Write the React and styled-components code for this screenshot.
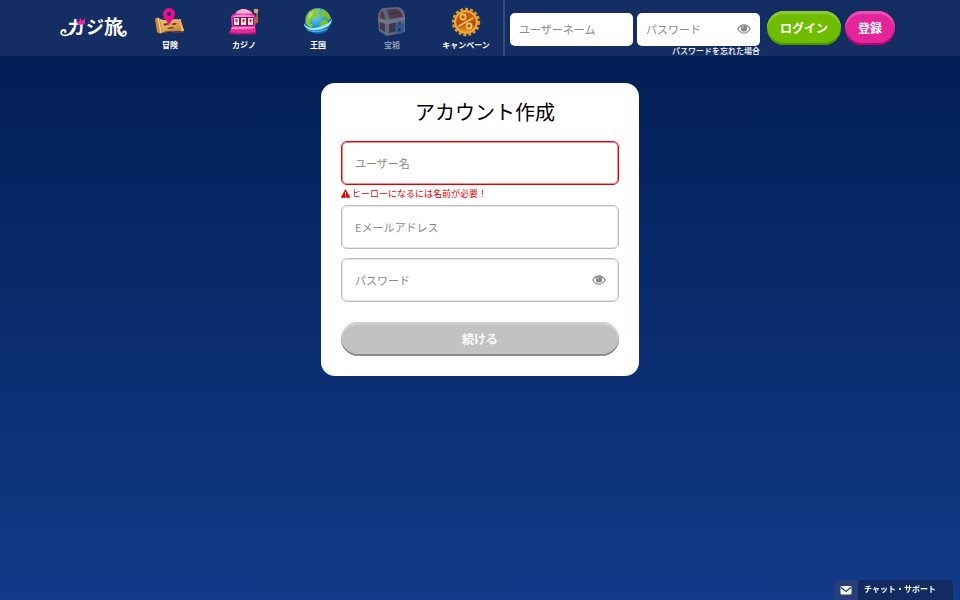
import React, { useState } from "react";
import styled, { createGlobalStyle } from "styled-components";

const GlobalStyle = createGlobalStyle`
  * {
    box-sizing: border-box;
  }

  body {
    margin: 0;
    min-height: 100vh;
    color: #fff;
    font-family: "Noto Sans CJK JP", "Noto Sans", sans-serif;
    background: linear-gradient(#001b50, #123a88) no-repeat fixed;
  }

  input,
  button {
    font-family: inherit;
  }
`;

const Header = styled.header`
  display: flex;
  height: 56px;
  padding-left: 60px;
  background: #142d63;
`;

const Logo = styled.a`
  width: 73px;
  padding-top: 12px;
`;

const Nav = styled.nav`
  display: flex;
  border-right: 2px solid #344c7e;
`;

const NavItem = styled.a`
  display: flex;
  flex-direction: column;
  align-items: center;
  gap: 1px;
  width: 74px;
  padding-top: 6px;
  color: #fff;
  font-size: 8px;
  font-weight: 700;
  line-height: 12px;
  text-decoration: none;
  opacity: ${(props) => (props.$locked ? 0.5 : 1)};
`;

const LoginForm = styled.form`
  display: flex;
  align-items: flex-start;
  gap: 4px;
  padding: 11px 0 0 5px;
`;

const LoginField = styled.div`
  width: 123px;
  padding-top: 2px;
`;

const InputWrapper = styled.div`
  position: relative;
`;

const LoginInput = styled.input`
  display: block;
  width: 100%;
  height: 33px;
  padding: 0 9px 2px;
  border: 0;
  border-radius: 5px;
  background: #fff;
  font-size: 11px;

  &::placeholder {
    color: #8a8a8a;
  }
`;

const ForgotLink = styled.a`
  display: block;
  color: #fff;
  font-size: 8px;
  font-weight: 500;
  line-height: 10px;
  text-align: right;
  text-decoration: none;
`;

const EyeButton = styled.button`
  position: absolute;
  top: 0;
  right: ${(props) => props.$right};
  display: flex;
  align-items: center;
  height: 100%;
  padding: 0 0 1px;
  border: 0;
  background: none;
  color: #888;
  cursor: pointer;
`;

const PillButton = styled.button`
  height: 34px;
  padding: 0 13px 1px;
  border: 0;
  border-radius: 17px;
  color: #fff;
  font-size: 12px;
  font-weight: 700;
  white-space: nowrap;
  background: ${(props) => props.$bg};
  box-shadow: inset 0 -2px 0 ${(props) => props.$shade},
    inset 0 3px 0 ${(props) => props.$light};
  cursor: pointer;
`;

const LoginButton = styled(PillButton)`
  margin-left: 3px;
`;

const SubmitButton = styled(PillButton)`
  width: 100%;
  margin-top: 20px;
`;

const Main = styled.main`
  display: flex;
  justify-content: center;
  padding: 27px 20px 40px;
`;

const Card = styled.form`
  width: 100%;
  max-width: 318px;
  padding: 14px 20px 20px;
  border-radius: 14px;
  background: #fff;
`;

const Title = styled.h1`
  margin: 0 0 14px;
  padding-left: 10px;
  color: #000;
  font-size: 20px;
  font-weight: 400;
  line-height: 30px;
  text-align: center;
`;

const Field = styled.div`
  position: relative;

  & + & {
    margin-top: 9px;
  }
`;

const FieldInput = styled.input`
  display: block;
  width: 100%;
  height: 44px;
  padding: 0 13px 1px;
  border: 1px solid ${(props) => (props.$error ? "#e60000" : "#bcbcbc")};
  border-radius: 6px;
  box-shadow: inset 0 0 0 1px ${(props) => (props.$error ? "#f79090" : "#e6e6e6")};
  background: #fff;
  font-size: 11px;

  &::placeholder {
    color: #8a8a8a;
  }
`;

const ErrorText = styled.p`
  display: flex;
  align-items: center;
  gap: 2px;
  height: 20px;
  margin: 0;
  padding-bottom: 4px;
  color: #e60000;
  font-size: 9px;
`;

const ChatButton = styled.button`
  position: fixed;
  right: 7px;
  bottom: 0;
  display: flex;
  width: 119px;
  height: 20px;
  padding: 0;
  border: 0;
  border-radius: 4px 4px 0 0;
  overflow: hidden;
  background: #142b61;
  color: #fff;
  font-size: 8px;
  font-weight: 700;
  line-height: 18px;
  cursor: pointer;
`;

const ChatIcon = styled.span`
  display: flex;
  align-items: center;
  justify-content: center;
  width: 24px;
  height: 20px;
  margin-right: 6px;
  background: #263f78;
`;

function LogoArt() {
  return (
    <svg width="68" height="30" viewBox="0 0 68 30" role="img" aria-label="カジ旅">
      <g fill="#fff" fontFamily="Noto Sans CJK JP, sans-serif" fontWeight="700">
        <text x="7" y="22" fontSize="18">カ</text>
        <text x="26" y="22" fontSize="18">ジ</text>
        <text x="44" y="22" fontSize="19">旅</text>
      </g>
      <path
        d="M13 17C11 22 7 24 3 23C0 22 1 18 4 18C6 18 6 20 5 20M58 19C60 25 66 25 66 21C66 19 63 19 63 21"
        fill="none"
        stroke="#fff"
        strokeWidth="1.8"
        strokeLinecap="round"
      />
      <path d="M18 13L16 8L19 10L20 5L22 9L25 6L25 12Z" fill="#e4249b" />
    </svg>
  );
}

function MapIcon() {
  return (
    <svg width="32" height="32" viewBox="0 0 32 32" aria-hidden="true">
      <defs>
        <linearGradient id="map" x1="0" y1="0" x2="1" y2="1">
          <stop offset="0" stopColor="#f0cd86" />
          <stop offset="0.55" stopColor="#dda355" />
          <stop offset="1" stopColor="#b86a27" />
        </linearGradient>
      </defs>
      <path d="M4 12L9 14L23 13L26 14L30 25L22 25Q13 24 8 27L5 27Z" fill="url(#map)" />
      <path d="M1 13Q3 10 6 13L8 26Q6 29 3 26Z" fill="#c98542" />
      <path d="M4 12L7 27" stroke="#f5d18b" strokeWidth="1.3" />
      <path d="M25 13Q27 12 27 15L30 24Q29 27 27 25Z" fill="#ecb365" />
      <path d="M8 27Q15 24 22 26L29 26" stroke="#91511f" fill="none" />
      <path d="M9 18l4-1 2 1-4 2zM13 22l5-1 3 1-6 1zM19 17l4 0-2 2-3 0z" fill="#633b1e" />
      <path d="M15 20C14 15 9 13 9 8a6 6 0 0 1 12 0C21 13 16 15 15 20Z" fill="#ea0d91" />
      <circle cx="15" cy="8" r="2" fill="#142d63" />
    </svg>
  );
}

function SlotIcon() {
  return (
    <svg width="32" height="32" viewBox="0 0 32 32" aria-hidden="true">
      <path d="M7 10Q7 5 11 4Q15 2 20 4Q25 5 25 10Z" fill="#ec77b6" />
      <path d="M9 7Q12 3 15 3Q20 3 23 7Z" fill="#f7b3d5" />
      <path d="M3 12Q3 8 7 8H24Q27 8 28 12L27 23H4Z" fill="#e9309f" />
      <path d="M5 10Q15 7 26 10V11H5Z" fill="#fb91cc" />
      <rect x="5" y="11" width="21" height="9" rx="2" fill="#970a5c" />
      <path d="M6 12h5v7H6zM13 12h5v7h-5zM20 12h5v7h-5z" fill="#fff0df" />
      <path d="M7 14L8.500 13L10 14L8.500 17ZM14 14L15.500 13L17 14L15.500 17ZM21 14L22.500 13L24 14L22.500 17Z" fill="#d42548" />
      <path d="M4 21H27L28 27Q15 29 1 27Z" fill="#e82a9c" />
      <path d="M4 21H27V22Q15 24 3 23Z" fill="#fb8cca" />
      <path d="M1 26Q15 28 28 26V28Q15 29 1 28Z" fill="#b8117a" />
      <path d="M27 17L29 13V6" fill="none" stroke="#b9785c" strokeWidth="1.5" />
      <circle cx="28" cy="5" r="2.3" fill="#e8a16e" />
      <circle cx="28" cy="15" r="2.3" fill="#c66334" />
    </svg>
  );
}

function GlobeIcon() {
  return (
    <svg width="32" height="32" viewBox="0 0 32 32" aria-hidden="true">
      <defs>
        <radialGradient id="sea" cx="0.4" cy="0.3" r="0.8">
          <stop offset="0" stopColor="#6dd5f5" />
          <stop offset="0.6" stopColor="#178bd3" />
          <stop offset="1" stopColor="#0758a2" />
        </radialGradient>
      </defs>
      <circle cx="16" cy="15" r="13" fill="url(#sea)" />
      <path d="M4 12Q6 5 12 3L18 3L17 6L14 7L17 9L13 13L9 13L8 17L11 19L9 22L4 18Z" fill="#89c936" />
      <path d="M20 3Q26 5 29 12L26 14L24 11L21 12L18 9ZM19 15L24 13L27 17L22 21L17 19Z" fill="#7fbf2f" />
      <path d="M7 7L11 5L10 10L6 13Z" fill="#b3df66" />
      <path
        d="M2 17C4 23 13 23 20 20C26 18 30 15 30 12C31 18 24 23 15 24C8 25 1 22 2 17Z"
        fill="#a8e6f7"
      />
      <path d="M5 24Q14 28 25 23" fill="none" stroke="#63b7e2" strokeLinecap="round" />
    </svg>
  );
}

function ChestIcon() {
  return (
    <svg width="32" height="32" viewBox="0 0 32 32" aria-hidden="true">
      <path d="M2 12Q2 4 7 2L22 1Q29 3 29 11V26L11 30L3 25Z" fill="#aaa49b" />
      <path d="M4 12Q4 5 6 5Q9 7 9 14ZM10 4L21 3Q26 5 27 11L13 13Q13 7 10 4Z" fill="#8e4a31" />
      <path d="M4 16L9 18V26L4 23ZM13 18L27 15V24L13 27Z" fill="#79432e" />
      <path d="M2 12L11 15L29 11V14L11 18L2 15Z" fill="#c7c1b8" />
      <path d="M13 8L24 6M13 21L27 18M13 24L27 21M4 19L9 22" stroke="#4f3028" />
      <path d="M21 20V17a2.500 2.500 0 0 1 5 0v3" fill="none" stroke="#9db8d5" strokeWidth="1.6" />
      <path d="M19 19L28 18V24Q27 28 23 28Q20 28 19 25Z" fill="#4783c1" />
      <path d="M23.500 22v3" stroke="#152b5c" strokeWidth="2" />
    </svg>
  );
}

function CampaignIcon() {
  return (
    <svg width="32" height="32" viewBox="0 0 32 32" aria-hidden="true">
      <defs>
        <linearGradient id="coin" x1="0" y1="0" x2="0" y2="1">
          <stop offset="0" stopColor="#c96616" />
          <stop offset="0.6" stopColor="#b44f0c" />
          <stop offset="1" stopColor="#e99a2b" />
        </linearGradient>
      </defs>
      <circle cx="16" cy="16" r="13" fill="none" stroke="#d99a36" strokeWidth="2.4" strokeDasharray="3 2" />
      <circle cx="16" cy="16" r="12" fill="#f0a93a" />
      <circle cx="16" cy="16" r="10" fill="url(#coin)" />
      <g fill="none" stroke="#ffc75c" strokeWidth="1.6" strokeLinecap="round">
        <path d="M9 20L23 12" />
        <circle cx="13" cy="11" r="2.600" />
        <circle cx="19" cy="20" r="2.600" />
      </g>
    </svg>
  );
}

function EyeIcon() {
  return (
    <svg width="14" height="12" viewBox="0 0 14 12" aria-hidden="true">
      <path
        d="M.7 6Q3.5 1.8 7 1.8T13.3 6Q10.5 10.2 7 10.2T.7 6Z"
        fill="none"
        stroke="currentColor"
        strokeWidth="1.2"
      />
      <circle cx="7" cy="5.4" r="3.2" fill="currentColor" />
      <path d="M5.4 5Q5.5 3.8 6.8 3.6" fill="none" stroke="#fff" strokeWidth=".6" />
    </svg>
  );
}

function WarningIcon() {
  return (
    <svg width="9" height="9" viewBox="0 0 9 9" aria-hidden="true">
      <path d="M4.5.5L9 8.5H0Z" fill="#e60000" stroke="#e60000" strokeWidth=".5" strokeLinejoin="round" />
      <path d="M4.5 3v3M4.5 6.7v1" stroke="#fff" />
    </svg>
  );
}

function MailIcon() {
  return (
    <svg width="12" height="10" viewBox="0 0 12 10" aria-hidden="true">
      <rect x="0.5" y="1" width="11" height="8.5" rx="1.5" fill="#fff" />
      <path d="M1 2.5L6 6.5L11 2.5" fill="none" stroke="#263f78" strokeWidth="1.3" />
    </svg>
  );
}

const navItems = [
  { label: "冒険", Icon: MapIcon },
  { label: "カジノ", Icon: SlotIcon },
  { label: "王国", Icon: GlobeIcon },
  { label: "宝箱", Icon: ChestIcon, locked: true },
  { label: "キャンペーン", Icon: CampaignIcon },
];

function App() {
  const [showLogin, setShowLogin] = useState(false);
  const [showSignup, setShowSignup] = useState(false);

  const handleSubmit = (e) => e.preventDefault();

  return (
    <>
      <GlobalStyle />
      <Header>
        <Logo href="#">
          <LogoArt />
        </Logo>
        <Nav>
          {navItems.map(({ label, Icon, locked }) => (
            <NavItem key={label} href="#" $locked={locked}>
              <Icon />
              {label}
            </NavItem>
          ))}
        </Nav>
        <LoginForm onSubmit={handleSubmit}>
          <LoginField>
            <LoginInput type="text" placeholder="ユーザーネーム" aria-label="ユーザーネーム" />
          </LoginField>
          <LoginField>
            <InputWrapper>
              <LoginInput
                type={showLogin ? "text" : "password"}
                placeholder="パスワード"
                aria-label="パスワード"
              />
              <EyeButton
                type="button"
                $right="9px"
                aria-label="パスワードを表示"
                onClick={() => setShowLogin(!showLogin)}
              >
                <EyeIcon />
              </EyeButton>
            </InputWrapper>
            <ForgotLink href="#">パスワードを忘れた場合</ForgotLink>
          </LoginField>
          <LoginButton type="submit" $bg="#70bd00" $shade="#4b9700" $light="#8bcb35">
            ログイン
          </LoginButton>
          <PillButton type="button" $bg="#e4249b" $shade="#bd0079" $light="#ea50af">
            登録
          </PillButton>
        </LoginForm>
      </Header>

      <Main>
        <Card onSubmit={handleSubmit} noValidate>
          <Title>アカウント作成</Title>
          <Field>
            <FieldInput
              type="text"
              placeholder="ユーザー名"
              aria-label="ユーザー名"
              aria-invalid="true"
              aria-describedby="name-error"
              $error
            />
          </Field>
          <ErrorText id="name-error">
            <WarningIcon />
            ヒーローになるには名前が必要！
          </ErrorText>
          <Field>
            <FieldInput type="email" placeholder="Eメールアドレス" aria-label="Eメールアドレス" />
          </Field>
          <Field>
            <FieldInput
              type={showSignup ? "text" : "password"}
              placeholder="パスワード"
              aria-label="パスワード"
            />
            <EyeButton
              type="button"
              $right="13px"
              aria-label="パスワードを表示"
              onClick={() => setShowSignup(!showSignup)}
            >
              <EyeIcon />
            </EyeButton>
          </Field>
          <SubmitButton type="submit" $bg="#c2c2c2" $shade="#8e8e8e" $light="#d0d0d0">
            続ける
          </SubmitButton>
        </Card>
      </Main>

      <ChatButton type="button">
        <ChatIcon>
          <MailIcon />
        </ChatIcon>
        チャット・サポート
      </ChatButton>
    </>
  );
}

export default App;
